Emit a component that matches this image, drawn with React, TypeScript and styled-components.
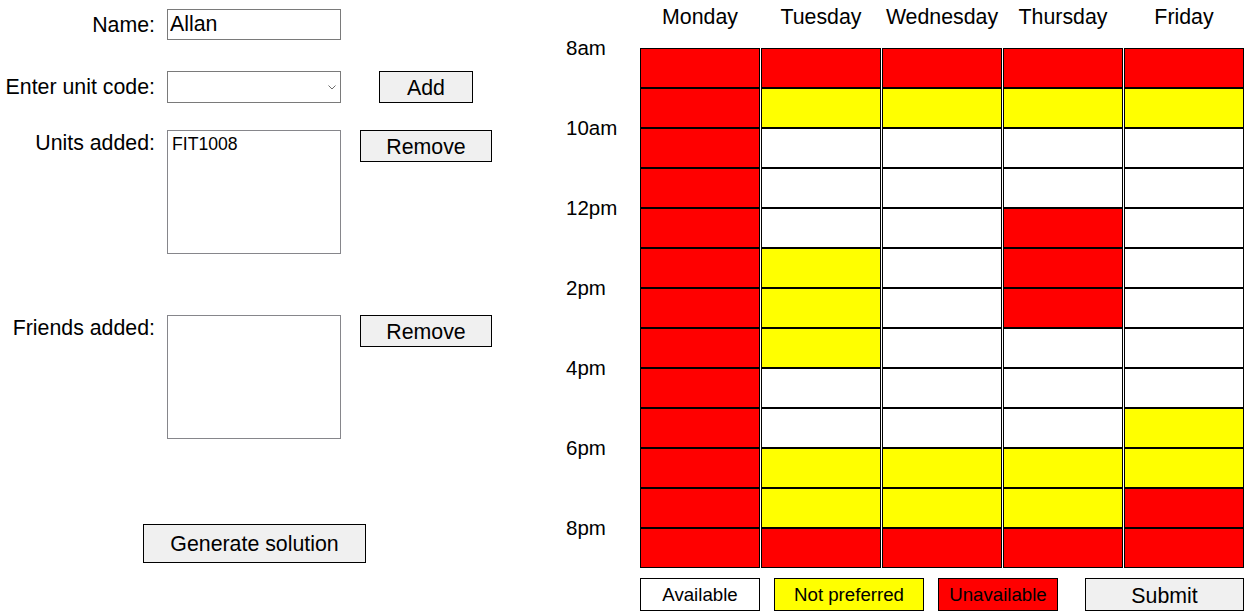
import React from "react";
import styled, { createGlobalStyle } from "styled-components";

const GlobalStyle = createGlobalStyle`
  body {
    margin: 0;
    background: #fff;
    font-family: "Liberation Sans", Arial, sans-serif;
    color: #000;
  }
  * {
    box-sizing: border-box;
  }
`;

type Slot = "free" | "meh" | "busy";

const COLORS: Record<Slot, string> = {
  free: "#ffffff",
  meh: "#ffff00",
  busy: "#ff0000",
};

const DAYS = ["Monday", "Tuesday", "Wednesday", "Thursday", "Friday"];
const TIMES = ["8am", "10am", "12pm", "2pm", "4pm", "6pm", "8pm"];

// 13 hourly slots from 8am to 8pm
const build = (s: string): Slot[] =>
  s.split("").map((c) => (c === "r" ? "busy" : c === "y" ? "meh" : "free"));

const SCHEDULE: Slot[][] = [
  build("rrrrrrrrrrrrr"),
  build("rywwwyyywwyyr"),
  build("rywwwwwwwwyyr"),
  build("rywwrrrwwwyyr"),
  build("rywwwwwwwyyrr"),
];

const Page = styled.div`
  display: flex;
  width: 1252px;
  height: 616px;
`;

const LeftPanel = styled.div`
  width: 566px;
  display: flex;
  flex-direction: column;
`;

const FormRow = styled.div<{ $top: number; $align?: string }>`
  display: flex;
  align-items: ${(p) => p.$align || "flex-start"};
  margin-top: ${(p) => p.$top}px;
`;

const Label = styled.div<{ $pad?: number }>`
  width: 155px;
  margin-right: 12px;
  text-align: right;
  font-size: 21.33px;
  line-height: 24px;
  padding-top: ${(p) => p.$pad || 0}px;
  white-space: nowrap;
`;

const TextInput = styled.input`
  width: 174px;
  height: 31px;
  border: 1px solid #7a7a7a;
  padding: 0 2px;
  margin: 0;
  font-family: "Liberation Sans", Arial, sans-serif;
  font-size: 21.33px;
  color: #000;
  outline: none;
`;

const Select = styled.div`
  width: 174px;
  height: 32px;
  border: 1px solid #7a7a7a;
  display: flex;
  align-items: center;
  justify-content: flex-end;
  padding-right: 4px;
`;

const ListBox = styled.div`
  width: 174px;
  height: 124px;
  border: 1px solid #86868b;
  padding: 1px 4px;
  font-size: 17.6px;
  line-height: 24px;
`;

const Button = styled.button<{ $w: number; $h: number; $ml?: number; $fs?: number; $pt?: number }>`
  width: ${(p) => p.$w}px;
  height: ${(p) => p.$h}px;
  margin: 0 0 0 ${(p) => p.$ml || 0}px;
  padding: ${(p) => p.$pt || 0}px 0 0 0;
  border: 1px solid #000;
  border-radius: 0;
  background: #f0f0f0;
  font-family: "Liberation Sans", Arial, sans-serif;
  font-size: ${(p) => p.$fs || 21.33}px;
  color: #000;
`;

const GenerateRow = styled.div`
  margin-top: 85px;
  padding-left: 143px;
`;

const RightPanel = styled.div`
  display: flex;
`;

const TimeColumn = styled.div`
  width: 74px;
  padding-top: 36px;
  display: flex;
  flex-direction: column;
`;

const TimeLabel = styled.div`
  height: 80px;
  font-size: 20.5px;
  line-height: 24px;
`;

const Schedule = styled.div`
  display: flex;
  flex-direction: column;
`;

const DayRow = styled.div`
  display: flex;
  gap: 1px;
  height: 48px;
`;

const DayHeader = styled.div`
  width: 120px;
  text-align: center;
  font-size: 21.33px;
  line-height: 24px;
  padding-top: 5px;
  white-space: nowrap;
`;

const Columns = styled.div`
  display: flex;
  gap: 1px;
`;

const DayColumn = styled.div`
  display: flex;
  flex-direction: column;
  width: 120px;
`;

const Cell = styled.div<{ $slot: Slot }>`
  height: 40px;
  border: 1px solid #000;
  background: ${(p) => COLORS[p.$slot]};
`;

const Legend = styled.div`
  display: flex;
  margin-top: 10px;
`;

const Key = styled.div<{ $w: number; $bg: string; $ml?: number }>`
  width: ${(p) => p.$w}px;
  height: 33px;
  margin-left: ${(p) => p.$ml || 0}px;
  padding-top: 1px;
  border: 1px solid #000;
  background: ${(p) => p.$bg};
  display: flex;
  align-items: center;
  justify-content: center;
  font-size: 18.67px;
`;

const Chevron = () => (
  <svg width="8" height="5" viewBox="0 0 8 5">
    <path d="M0.5 0.5 L4 4 L7.5 0.5" fill="none" stroke="#6d6d6d" strokeWidth="1" />
  </svg>
);

const App = () => {
  return (
    <Page>
      <GlobalStyle />
      <LeftPanel>
        <FormRow $top={9} $align="center">
          <Label>Name:</Label>
          <TextInput value="Allan" readOnly />
        </FormRow>
        <FormRow $top={31} $align="center">
          <Label>Enter unit code:</Label>
          <Select>
            <Chevron />
          </Select>
          <Button $w={94} $h={32} $ml={38} $pt={2}>
            Add
          </Button>
        </FormRow>
        <FormRow $top={27}>
          <Label $pad={1}>Units added:</Label>
          <ListBox>FIT1008</ListBox>
          <Button $w={132} $h={32} $ml={19} $pt={3}>
            Remove
          </Button>
        </FormRow>
        <FormRow $top={61}>
          <Label $pad={1}>Friends added:</Label>
          <ListBox />
          <Button $w={132} $h={32} $ml={19} $pt={3}>
            Remove
          </Button>
        </FormRow>
        <GenerateRow>
          <Button $w={223} $h={39} $pt={1}>
            Generate solution
          </Button>
        </GenerateRow>
      </LeftPanel>
      <RightPanel>
        <TimeColumn>
          {TIMES.map((t) => (
            <TimeLabel key={t}>{t}</TimeLabel>
          ))}
        </TimeColumn>
        <Schedule>
          <DayRow>
            {DAYS.map((d) => (
              <DayHeader key={d}>{d}</DayHeader>
            ))}
          </DayRow>
          <Columns>
            {SCHEDULE.map((col, i) => (
              <DayColumn key={DAYS[i]}>
                {col.map((slot, j) => (
                  <Cell key={j} $slot={slot} />
                ))}
              </DayColumn>
            ))}
          </Columns>
          <Legend>
            <Key $w={120} $bg="#ffffff">
              Available
            </Key>
            <Key $w={150} $bg="#ffff00" $ml={14}>
              Not preferred
            </Key>
            <Key $w={120} $bg="#ff0000" $ml={14}>
              Unavailable
            </Key>
            <Button $w={159} $h={33} $ml={27} $pt={3}>
              Submit
            </Button>
          </Legend>
        </Schedule>
      </RightPanel>
    </Page>
  );
};

export default App;
